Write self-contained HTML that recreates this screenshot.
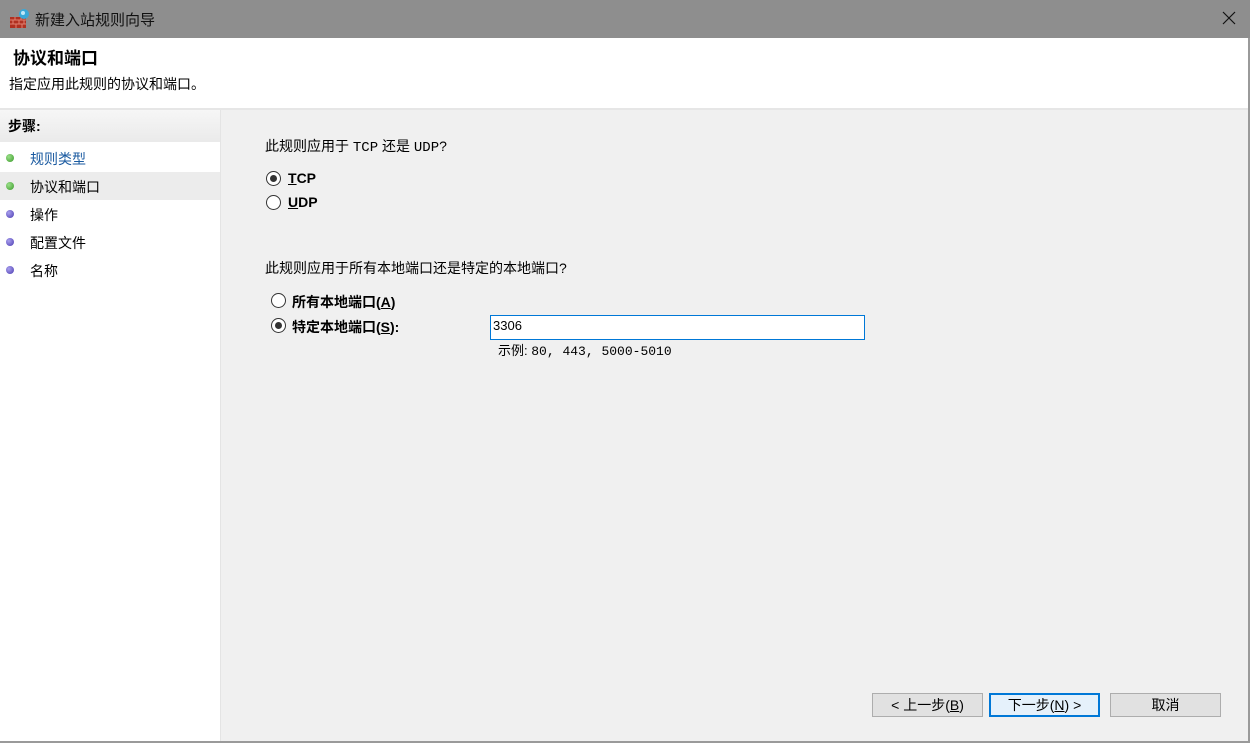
<!DOCTYPE html>
<html><head><meta charset="utf-8"><style>
*{margin:0;padding:0;box-sizing:border-box}
body{width:1250px;height:743px;overflow:hidden;background:#f0f0f0;font-family:"Liberation Sans","Noto Sans CJK SC",sans-serif;font-size:14px;color:#000;position:relative}
.a{position:absolute}
.title{left:0;top:0;width:1250px;height:38px;background:#8e8e8e}
.hdr{left:0;top:38px;width:1249px;height:70px;background:#fff}
.left{left:0;top:110px;width:221px;height:633px;background:#fff;border-right:1px solid #e4e4e4}
.rb{right:0;top:38px;width:2px;height:705px;background:#9a9a9a}
.dot{width:7px;height:7px;border-radius:50%}
.g{background:radial-gradient(circle at 35% 35%,#9be08a,#3a9a2a)}
.p{background:radial-gradient(circle at 35% 35%,#a9a0ee,#4a3ab0)}
.radio{width:15px;height:15px;border:1px solid #333;border-radius:50%;background:#fff}
.radio.on::after{content:"";position:absolute;left:3px;top:3px;width:7px;height:7px;border-radius:50%;background:#333}
.btn{height:24px;border:1px solid #adadad;background:#e1e1e1;text-align:center;line-height:22px;font-size:14px}
.mono{font-family:"Liberation Mono","Noto Sans CJK SC",monospace}
u{text-decoration:underline}
</style></head><body>
<div class="a title"></div>
<svg class="a" style="left:9px;top:8px" width="22" height="22" viewBox="0 0 22 22"><rect x="1" y="9" width="16" height="11" fill="#b03020"/><path d="M1 12h16M1 16h16M6 9v3M12 9v3M4 12v4M10 12v4M15 12v4M7 16v4M13 16v4" stroke="#e08070" stroke-width="1"/><circle cx="15" cy="6" r="5" fill="#3aa8d8"/><circle cx="14" cy="5" r="2" fill="#bfe8f8"/></svg>
<div class="a" style="left:35px;top:9px;font-size:15px;color:#111">新建入站规则向导</div>
<svg class="a" style="left:1222px;top:11px" width="14" height="14" viewBox="0 0 14 14"><path d="M1 1L13 13M13 1L1 13" stroke="#111" stroke-width="1.2"/></svg>
<div class="a hdr"></div>
<div class="a" style="left:13px;top:44px;font-size:17px;font-weight:bold">协议和端口</div>
<div class="a" style="left:9px;top:74px">指定应用此规则的协议和端口。</div>
<div class="a" style="left:0;top:108px;width:1249px;height:2px;background:#e6e6e6"></div>
<div class="a left"></div>
<div class="a" style="left:0;top:110px;width:220px;height:32px;background:linear-gradient(#f6f6f6,#eaeaea)"></div>
<div class="a" style="left:8px;top:116px;font-weight:bold">步骤:</div>
<div class="a" style="left:0;top:172px;width:220px;height:28px;background:#ececec"></div>
<div class="a dot g" style="left:6px;top:154px;width:8px;height:8px"></div><div class="a" style="left:30px;top:149px;color:#1a5aa0">规则类型</div>
<div class="a dot g" style="left:6px;top:182px;width:8px;height:8px"></div><div class="a" style="left:30px;top:177px">协议和端口</div>
<div class="a dot p" style="left:6px;top:210px;width:8px;height:8px"></div><div class="a" style="left:30px;top:205px">操作</div>
<div class="a dot p" style="left:6px;top:238px;width:8px;height:8px"></div><div class="a" style="left:30px;top:233px">配置文件</div>
<div class="a dot p" style="left:6px;top:266px;width:8px;height:8px"></div><div class="a" style="left:30px;top:261px">名称</div>
<div class="a rb"></div>
<div class="a" style="left:0;top:741px;width:1250px;height:2px;background:#9a9a9a"></div>
<div class="a" style="left:265px;top:136px">此规则应用于 <span class="mono">TCP</span> 还是 <span class="mono">UDP</span>?</div>
<div class="a radio on" style="left:266px;top:171px"></div><div class="a" style="left:288px;top:170px;font-weight:bold"><u>T</u>CP</div>
<div class="a radio" style="left:266px;top:195px"></div><div class="a" style="left:288px;top:194px;font-weight:bold"><u>U</u>DP</div>
<div class="a" style="left:265px;top:258px">此规则应用于所有本地端口还是特定的本地端口?</div>
<div class="a radio" style="left:271px;top:293px"></div><div class="a" style="left:292px;top:292px;font-weight:bold">所有本地端口(<u>A</u>)</div>
<div class="a radio on" style="left:271px;top:318px"></div><div class="a" style="left:292px;top:317px;font-weight:bold">特定本地端口(<u>S</u>):</div>
<div class="a" style="left:490px;top:315px;width:375px;height:25px;background:#fff;border:1px solid #0078d7"></div>
<div class="a" style="left:493px;top:318px;font-size:13px">3306</div>
<div class="a" style="left:498px;top:340px;font-size:13px">示例: <span class="mono">80, 443, 5000-5010</span></div>
<div class="a btn" style="left:872px;top:693px;width:111px">&lt; 上一步(<u>B</u>)</div>
<div class="a btn" style="left:989px;top:693px;width:111px;border:2px solid #0078d7;background:#e5f1fb;line-height:20px">下一步(<u>N</u>) &gt;</div>
<div class="a btn" style="left:1110px;top:693px;width:111px">取消</div>
</body></html>
